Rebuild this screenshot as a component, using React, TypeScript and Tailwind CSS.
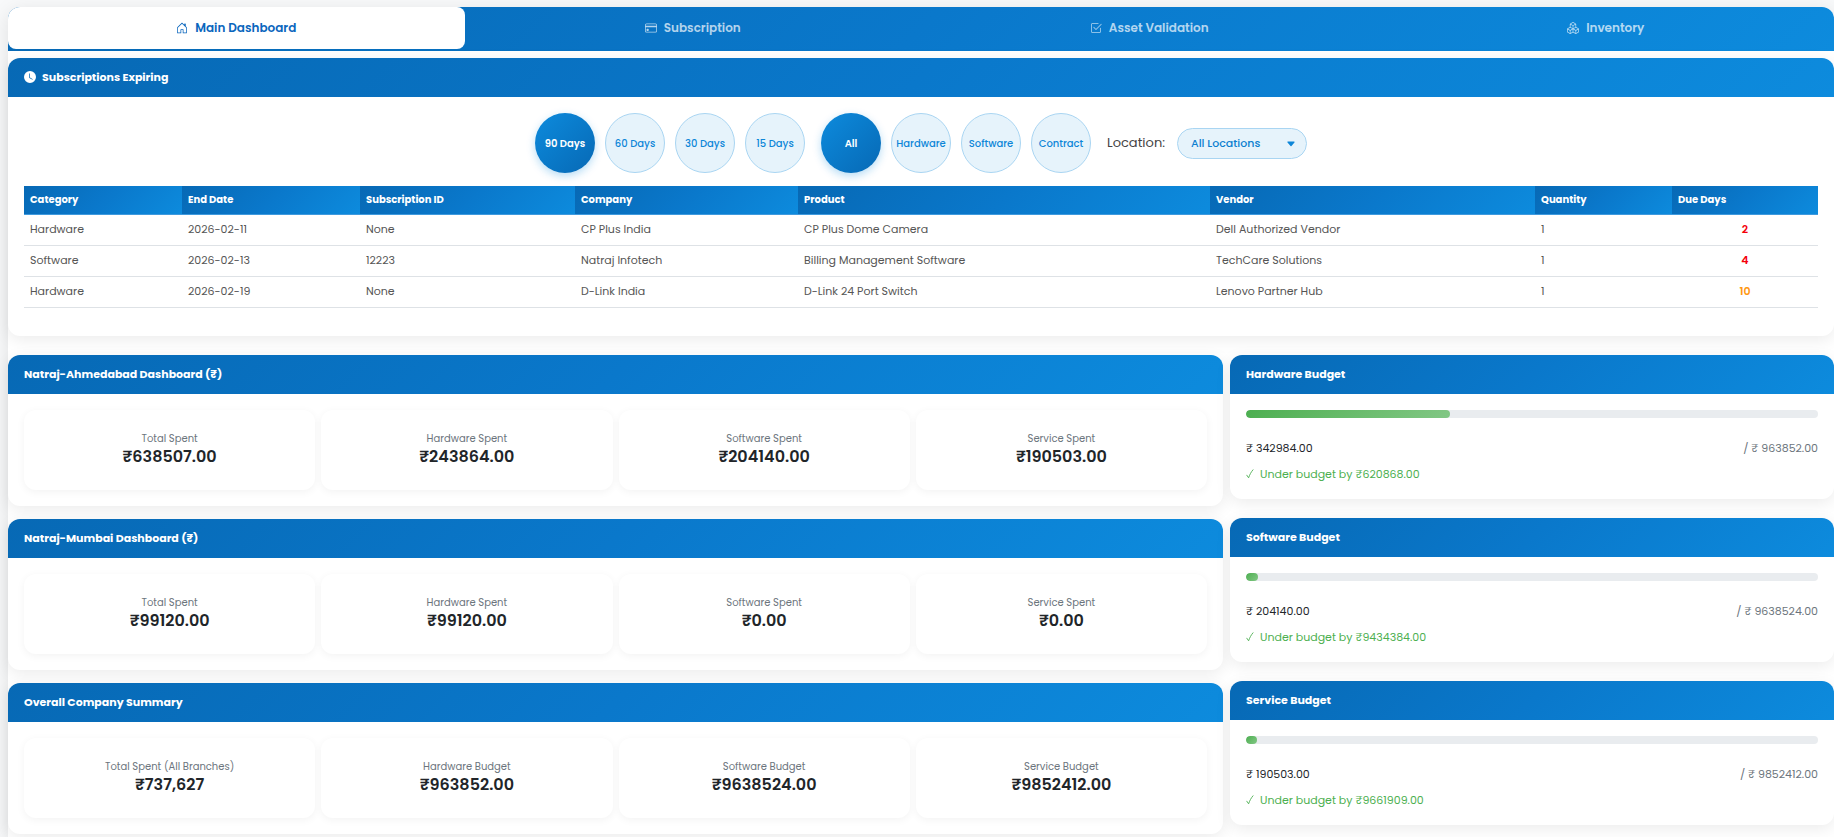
import { useState } from 'react'
import { BsHouseDoor, BsCreditCard, BsCheck2Square, BsBoxes, BsClockFill, BsCaretDownFill } from 'react-icons/bs'

const tabs = [
  { id: 'main', label: 'Main Dashboard', icon: BsHouseDoor },
  { id: 'subscription', label: 'Subscription', icon: BsCreditCard },
  { id: 'validation', label: 'Asset Validation', icon: BsCheck2Square },
  { id: 'inventory', label: 'Inventory', icon: BsBoxes },
]

const dayFilters = ['90 Days', '60 Days', '30 Days', '15 Days']
const typeFilters = ['All', 'Hardware', 'Software', 'Contract']

const columns = [
  { label: 'Category', width: 'w-[158px]' },
  { label: 'End Date', width: 'w-[178px]' },
  { label: 'Subscription ID', width: 'w-[215px]' },
  { label: 'Company', width: 'w-[223px]' },
  { label: 'Product', width: 'w-[412px]' },
  { label: 'Vendor', width: 'w-[325px]' },
  { label: 'Quantity', width: 'w-[137px]' },
  { label: 'Due Days', width: 'w-[146px]' },
]

const subscriptions = [
  { cells: ['Hardware', '2026-02-11', 'None', 'CP Plus India', 'CP Plus Dome Camera', 'Dell Authorized Vendor', '1'], due: 2 },
  { cells: ['Software', '2026-02-13', '12223', 'Natraj Infotech', 'Billing Management Software', 'TechCare Solutions', '1'], due: 4 },
  { cells: ['Hardware', '2026-02-19', 'None', 'D-Link India', 'D-Link 24 Port Switch', 'Lenovo Partner Hub', '1'], due: 10 },
]

const branches = [
  {
    title: 'Natraj-Ahmedabad Dashboard (₹)',
    stats: [['Total Spent', '₹638507.00'], ['Hardware Spent', '₹243864.00'], ['Software Spent', '₹204140.00'], ['Service Spent', '₹190503.00']],
  },
  {
    title: 'Natraj-Mumbai Dashboard (₹)',
    stats: [['Total Spent', '₹99120.00'], ['Hardware Spent', '₹99120.00'], ['Software Spent', '₹0.00'], ['Service Spent', '₹0.00']],
  },
  {
    title: 'Overall Company Summary',
    stats: [['Total Spent (All Branches)', '₹737,627'], ['Hardware Budget', '₹963852.00'], ['Software Budget', '₹9638524.00'], ['Service Budget', '₹9852412.00']],
  },
]

const budgets = [
  { title: 'Hardware Budget', spent: 342984, total: 963852 },
  { title: 'Software Budget', spent: 204140, total: 9638524 },
  { title: 'Service Budget', spent: 190503, total: 9852412 },
]

function Card({ title, icon, children }: { title: string; icon?: React.ReactNode; children: React.ReactNode }) {
  return (
    <section className="bg-white rounded-xl overflow-hidden shadow-[0_4px_16px_rgba(0,0,0,0.08)]">
      <h2 className="h-[39px] px-4 pb-px flex items-center gap-1.5 text-white text-[11px] leading-[18px] font-bold bg-linear-135 from-[#0769b5] via-[#0a78cb] to-[#0d8bdd]">
        {icon}
        {title}
      </h2>
      {children}
    </section>
  )
}

function FilterButton({ label, active, onClick }: { label: string; active: boolean; onClick: () => void }) {
  return (
    <button
      type="button"
      aria-pressed={active}
      onClick={onClick}
      className={`size-[60px] shrink-0 rounded-full text-[10px] whitespace-nowrap ${
        active
          ? 'text-white font-semibold bg-linear-135 from-[#0d8bdd] to-[#0769b5] shadow-[0_3px_8px_rgba(13,139,221,0.3)]'
          : 'text-[#0d86d8] font-medium bg-[#e6f3fb] border border-[#a9d5f2]'
      }`}>
      {label}
    </button>
  )
}

function ThinCheck() {
  return (
    <svg width="8" height="10" viewBox="0 0 8 10" fill="none" stroke="currentColor" strokeLinecap="round" strokeLinejoin="round" className="shrink-0">
      <path d="M0.8 6.2 L2.6 8.8 C3.6 6 5 3 7 0.8" strokeWidth="0.9" />
    </svg>
  )
}

export default function App() {
  const [tab, setTab] = useState('main')
  const [days, setDays] = useState('90 Days')
  const [type, setType] = useState('All')

  return (
    <div className="min-h-screen flex flex-col pl-2 pt-[7px] bg-[#f8f9fa] overflow-hidden font-['Poppins','Inter',sans-serif]">
      <div className="flex-1 flex flex-col bg-white rounded-t-xl shadow-[0_4px_20px_rgba(0,0,0,0.1)]">
        {/* Tabs */}
        <nav className="flex pb-0.5 rounded-t-xl overflow-hidden bg-linear-135 from-[#0769b5] via-[#0a78cb] to-[#0d8bdd]">
          {tabs.map(item => (
            <button
              key={item.id}
              type="button"
              onClick={() => setTab(item.id)}
              className={`flex-1 h-[42px] flex items-center justify-center gap-[7px] text-[12px] leading-[18px] font-semibold ${
                tab === item.id ? 'bg-white text-[#0a66bd] rounded-lg' : 'text-white/70'
              }`}>
              <item.icon size={12} className="shrink-0" />
              {item.label}
            </button>
          ))}
        </nav>

        <main className="mt-[7px]">
          <Card title="Subscriptions Expiring" icon={<BsClockFill size={12} />}>
            <div className="px-4 pt-4 pb-7">
              {/* Filters */}
              <div className="flex items-center justify-center gap-4 mb-[13px]">
                <div className="flex gap-[10px]">
                  {dayFilters.map(d => (
                    <FilterButton key={d} label={d} active={days === d} onClick={() => setDays(d)} />
                  ))}
                </div>
                <div className="flex gap-[10px]">
                  {typeFilters.map(t => (
                    <FilterButton key={t} label={t} active={type === t} onClick={() => setType(t)} />
                  ))}
                </div>
                <div className="flex items-center gap-3">
                  <label htmlFor="location" className="text-[13px] text-[#444]">Location:</label>
                  <div className="relative">
                    <select
                      id="location"
                      className="w-[130px] h-[31px] pl-[13px] appearance-none rounded-full border border-[#a9d5f2] bg-[#e6f3fb] text-[11px] font-medium text-[#0d7fd0]">
                      <option>All Locations</option>
                      <option>Ahmedabad</option>
                      <option>Mumbai</option>
                    </select>
                    <BsCaretDownFill size={10} className="absolute right-[11px] top-[11px] text-[#0d86d8] pointer-events-none" />
                  </div>
                </div>
              </div>

              <table className="w-full table-fixed border-separate border-spacing-0 text-left">
                <thead>
                  <tr>
                    {columns.map(col => (
                      <th
                        key={col.label}
                        className={`${col.width} h-[29px] px-1.5 text-[10px] leading-[16px] font-bold text-white border-b border-[#3f9ade] bg-linear-135 from-[#0769b5] via-[#0a78cb] to-[#0d8bdd]`}>
                        {col.label}
                      </th>
                    ))}
                  </tr>
                </thead>
                <tbody>
                  {subscriptions.map(row => (
                    <tr key={row.cells[1]} className="text-[11px] leading-[18px] text-[#555]">
                      {row.cells.map((cell, i) => (
                        <td key={i} className="h-[31px] px-1.5 pb-0.5 border-b border-[#dee2e6]">{cell}</td>
                      ))}
                      <td className={`px-1.5 pb-0.5 border-b border-[#dee2e6] text-center font-semibold ${row.due < 10 ? 'text-[#f40009]' : 'text-[#ff9812]'}`}>
                        {row.due}
                      </td>
                    </tr>
                  ))}
                </tbody>
              </table>
            </div>
          </Card>

          <div className="mt-[19px] grid grid-cols-3 gap-[7px]">
            {/* Spending per branch */}
            <div className="col-span-2 flex flex-col gap-[13px]">
              {branches.map(branch => (
                <Card key={branch.title} title={branch.title}>
                  <div className="p-4 grid grid-cols-4 gap-1.5">
                    {branch.stats.map(([label, value]) => (
                      <div key={label} className="h-20 pb-0.5 flex flex-col justify-center text-center rounded-xl shadow-[0_2px_8px_rgba(0,0,0,0.05)]">
                        <div className="text-[10px] leading-[16px] text-[#6c757d]">{label}</div>
                        <div className="text-[16px] leading-[20px] font-semibold text-[#212529]">{value}</div>
                      </div>
                    ))}
                  </div>
                </Card>
              ))}
            </div>

            {/* Budgets */}
            <div className="flex flex-col gap-[19px]">
              {budgets.map(b => (
                <Card key={b.title} title={b.title}>
                  <div className="p-4 text-[11px] leading-[18px]">
                    <div className="h-2 rounded-full overflow-hidden bg-[#e9ecef]">
                      <div
                        className="h-full rounded-full bg-linear-135 from-[#4caf50] to-[#81c784]"
                        style={{ width: `${(b.spent / b.total) * 100}%` }}
                      />
                    </div>
                    <div className="mt-[21px] flex justify-between">
                      <span className="text-[#212529]">₹ {b.spent.toFixed(2)}</span>
                      <span className="text-[#6c757d]">/ ₹ {b.total.toFixed(2)}</span>
                    </div>
                    <div className="mt-2 flex items-center gap-1.5 text-[#4caf50]">
                      <ThinCheck />
                      <span>Under budget by ₹{(b.total - b.spent).toFixed(2)}</span>
                    </div>
                  </div>
                </Card>
              ))}
            </div>
          </div>
        </main>
      </div>
    </div>
  )
}
